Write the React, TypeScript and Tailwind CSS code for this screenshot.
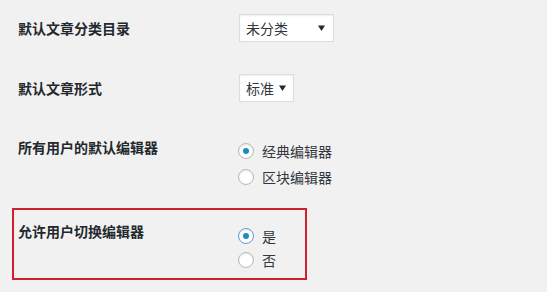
import React from "react";

const font = { fontFamily: '"Noto Sans CJK SC", "Liberation Sans", sans-serif' };

function Arrow() {
  return (
    <svg width="7" height="6" viewBox="0 0 7 6" className="shrink-0">
      <path d="M0 0.5 L7 0.5 L3.5 6 Z" fill="#23282d" />
    </svg>
  );
}

function Select({ text, width, gap, pr }: { text: string; width: string; gap: string; pr: string }) {
  return (
    <div
      className={`${width} ${pr} h-[28px] shrink-0 whitespace-nowrap bg-white border border-[#dddddd] shadow-[inset_0_1px_2px_rgba(0,0,0,0.07)] flex items-center pl-[6px] text-[14px] text-[#32373c] leading-[18px]`}
    >
      <span className="shrink-0">{text}</span>
      <span className={gap} />
      <Arrow />
    </div>
  );
}

function Radio({ checked, focus, label, h }: { checked?: boolean; focus?: boolean; label: string; h: string }) {
  return (
    <div className={`${h} flex items-center gap-[8px]`}>
      <span
        className={`w-[16px] h-[16px] rounded-full bg-white border flex items-center justify-center shadow-[inset_0_1px_2px_rgba(0,0,0,0.1)] ${
          focus ? "border-[#5b9dd9]" : "border-[#b4b9be]"
        }`}
      >
        {checked && <span className="w-[6px] h-[6px] rounded-full bg-[#1e8cbe]" />}
      </span>
      <span className="text-[14px] leading-[18px] text-[#32373c]">{label}</span>
    </div>
  );
}

export default function App() {
  return (
    <div className="w-[547px] h-[292px] bg-[#f1f1f1] overflow-hidden pl-[12px]" style={font}>
      <div className="flex items-center pt-[14px] pl-[6px]">
        <div className="w-[221px] text-[14px] font-bold leading-[18px] text-[#23282d]">默认文章分类目录</div>
        <Select text="未分类" width="w-[95px]" gap="flex-1" pr="pr-[8px]" />
      </div>
      <div className="flex items-center mt-[32px] pl-[6px]">
        <div className="w-[221px] text-[14px] font-bold leading-[18px] text-[#23282d]">默认文章形式</div>
        <Select text="标准" width="w-[55px]" gap="w-[5px] shrink-0" pr="pr-[6px]" />
      </div>
      <div className="flex items-start mt-[36px] pl-[6px]">
        <div className="w-[220px] text-[14px] font-bold leading-[18px] text-[#23282d]">所有用户的默认编辑器</div>
        <div className="flex flex-col">
          <Radio checked label="经典编辑器" h="h-[26px]" />
          <Radio label="区块编辑器" h="h-[26px]" />
        </div>
      </div>
      <div className="mt-[18px] w-[295px] h-[72px] border-2 border-[#d0202e] flex items-start pl-[4px]">
        <div className="w-[220px] mt-[12px] text-[14px] font-bold leading-[18px] text-[#23282d]">允许用户切换编辑器</div>
        <div className="flex flex-col mt-[14px]">
          <Radio checked focus label="是" h="h-[24px]" />
          <Radio label="否" h="h-[24px]" />
        </div>
      </div>
    </div>
  );
}
